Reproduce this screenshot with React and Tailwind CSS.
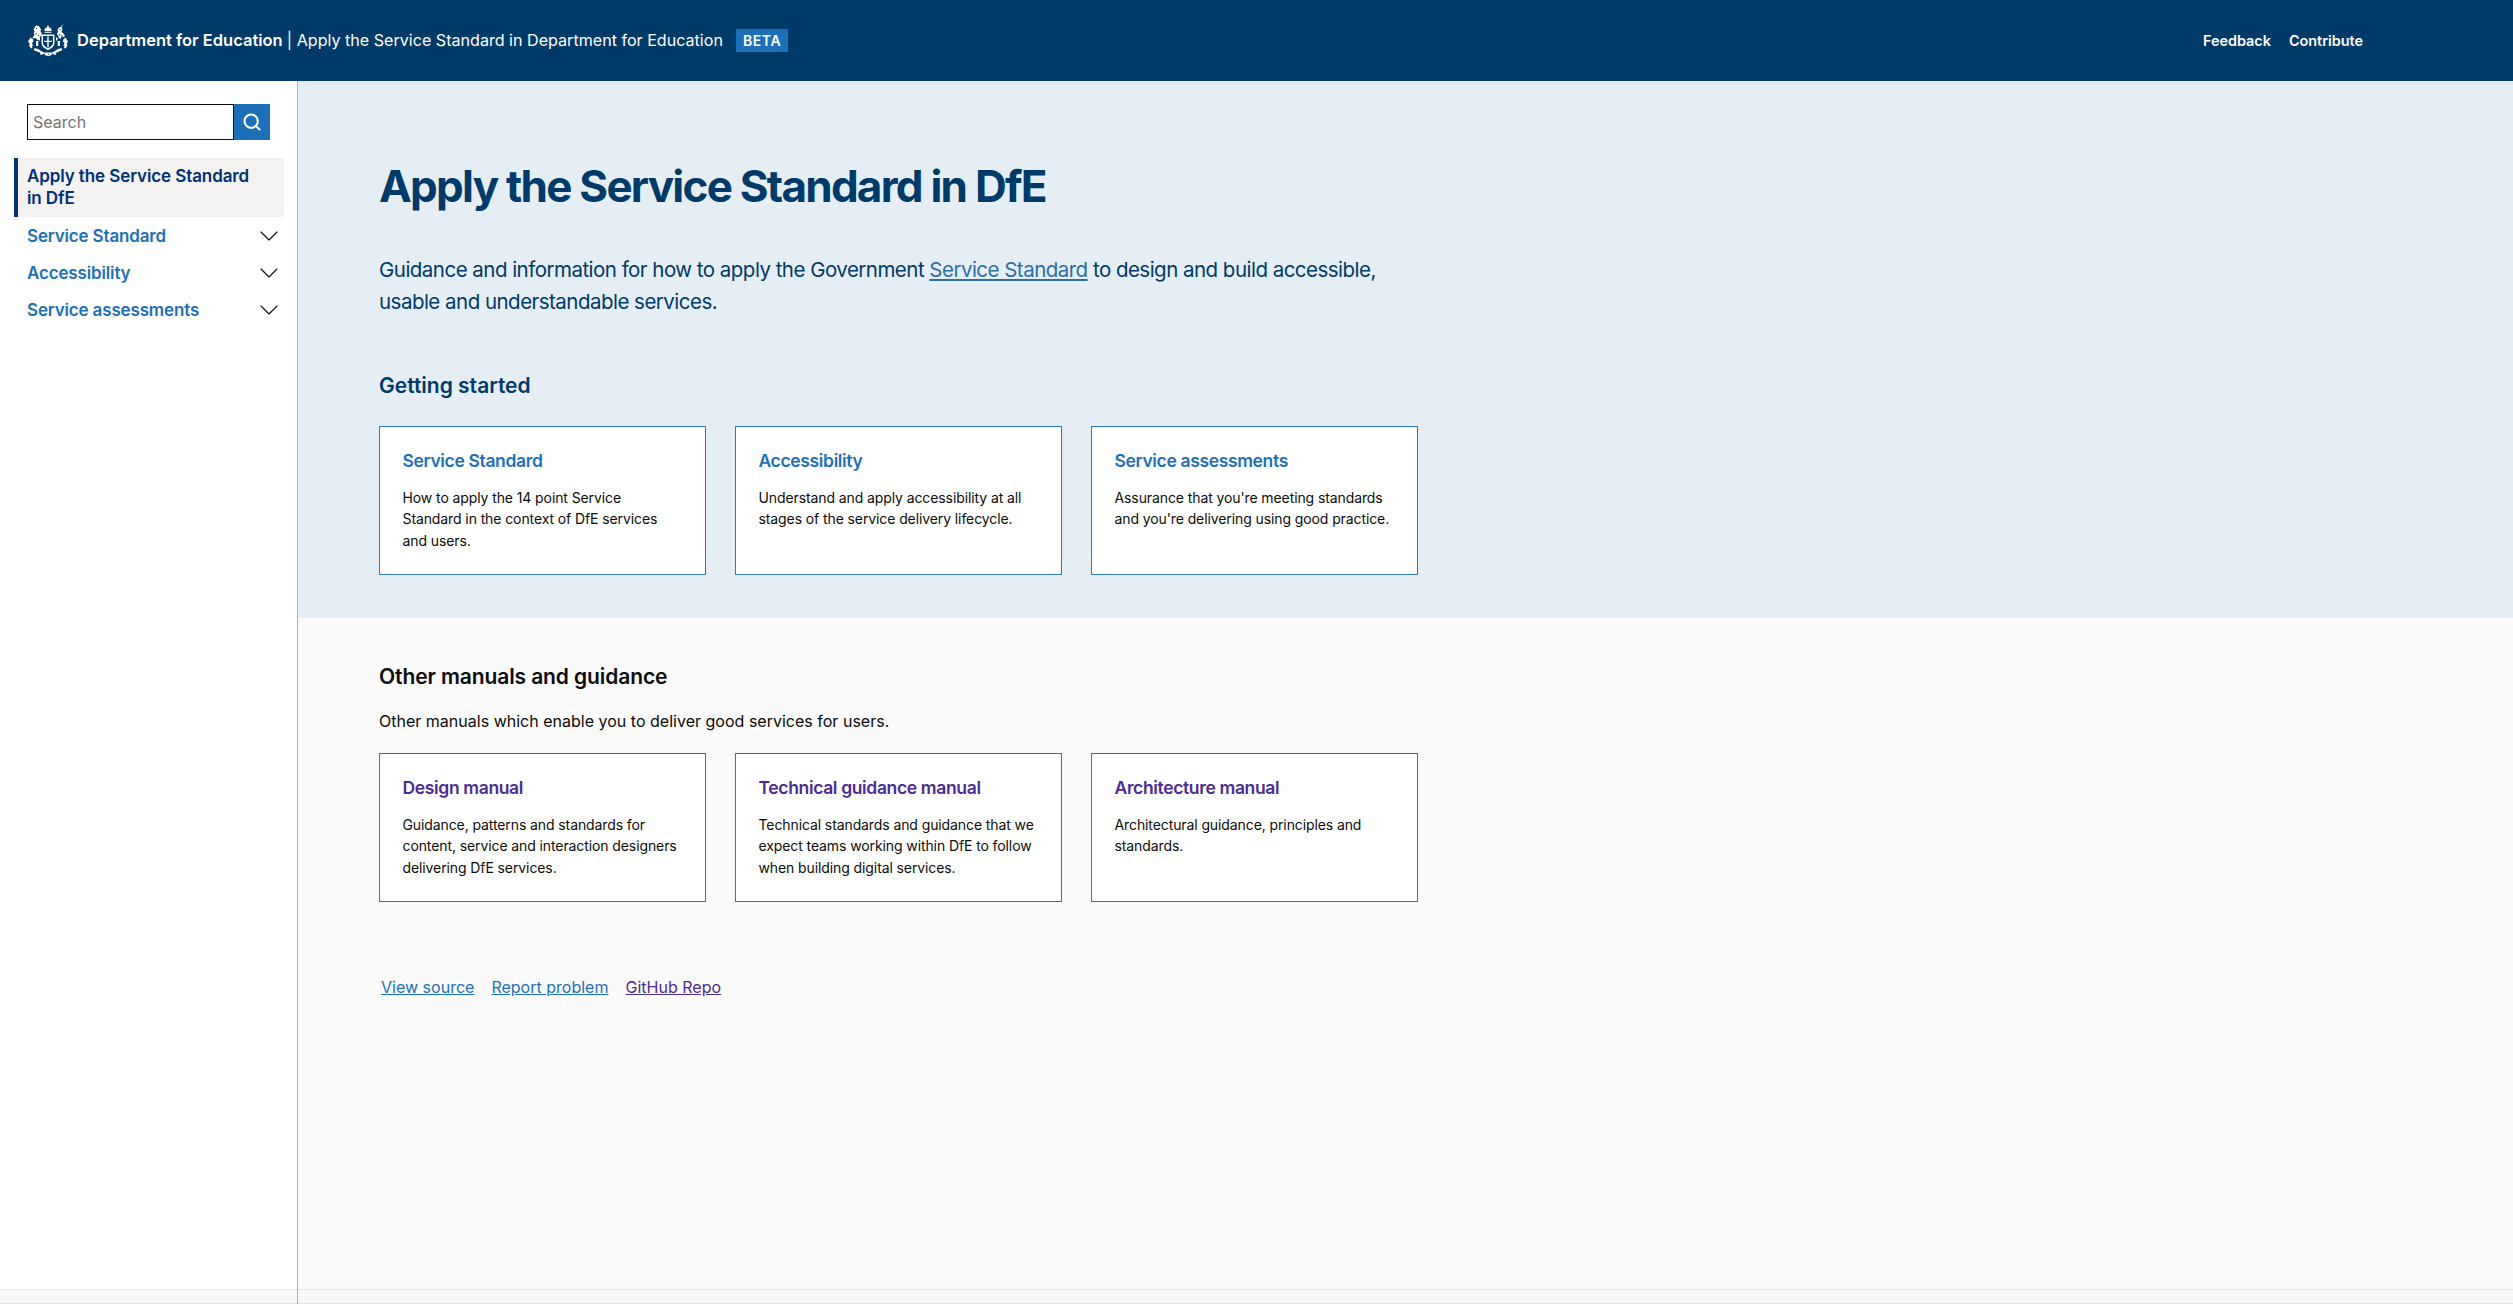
import React from 'react';
import { Search, ChevronDown } from 'lucide-react';

const font = { fontFamily: 'Inter, sans-serif' };

// Royal crest, roughly: crown, lion, unicorn, shield and motto scroll
const Crest = () => (
  <svg viewBox="0 0 40 33" className="w-10 h-[33px] shrink-0" fill="#fff">
    <path d="M17 3.500l1.200 1L20 1l1.800 3.500 1.200-1 .6 3.500h-7.200z" />
    <path d="M16.500 7.800h7v1h-7z" />
    {/* lion */}
    <path d="M8 1.500l2.500.5 1.500 1.500 1 2-.5 2 1.500 2-1 2.500-1.500 1-.5 2.500-1.800.5L8 14l-2.500.5L4.500 13l2-1.500-.8-2.500.8-1.500-1-2z" />
    <path d="M8 4h1v1H8zM7.500 9h1.200v1.200H7.500zM10 11h1v1h-1z" fill="#003a69" />
    {/* unicorn */}
    <path d="M35 0l-1.500 4 1 1.500-1 2.500 2 1.500 1.500 2.500-1.500 1-2-.8-.8 2.500-1.800-.5-.5-2.500-1.500-1.500 1-2.500-.5-2 1.500-2 2-1z" />
    <path d="M31.500 5h1v1h-1zM31 10h1.200v1.200H31zM33.500 11h1v1h-1z" fill="#003a69" />
    {/* side legs and tails */}
    <path d="M2.500 13.500l2.500 1.500.5 2.500-1.500 1.500 1 2.500-1 .5.5 2-1.500.5-2-3 .8-1.500L0 17.500zM37.500 13.500L40 17.500l-1.300 2.500.8 1.500-2 3-1.500-.5.5-2-1-.5 1-2.500-1.500-1.500.5-2.500z" />
    {/* shield */}
    <path fillRule="evenodd" d="M13.500 10.500h13v8.500c0 3.200-3.200 5.500-6.500 7-3.300-1.500-6.500-3.800-6.500-7zM15 12v7c0 2.300 2.600 4 5 5.200 2.400-1.200 5-2.900 5-5.200v-7z" />
    <path d="M19.300 12.500h1.400v4.200h3.300v1.300h-3.300v5.200h-1.400V18H16v-1.300h3.300z" />
    <path d="M8 17h2.300v5H8zM29.700 17H32v5h-2.300z" />
    <path d="M10.500 13.500h1.500v3h-1.500zM28 13.500h1.500v3H28z" />
    {/* motto scroll */}
    <path d="M6.500 24l3.500 1 3 2 3 1.500h8l3-1.500 3-2 3.500-1 .8 2.200-3.800 1.500-2 .8-.8 2.500-3-1-2 1.500-2.500.5-2.500-.5-2-1.500-3 1-.8-2.500-2-.8L5.700 26.200z" />
    <path d="M16 29.500h1v1h-1zM20 29.800h1v1h-1zM23.500 29.500h1v1h-1z" fill="#003a69" />
  </svg>
);

const NavRow = ({ label }) => (
  <div className="flex items-center justify-between h-[37px] pl-[27px] pr-[12px]">
    <a className="mt-[2px] text-[17px] tracking-[-0.15px] font-semibold text-[#1d70b8]">{label}</a>
    <ChevronDown className="w-8 h-8 text-[#0b0c0c]" strokeWidth={0.85} />
  </div>
);

const Card = ({ title, text, visited }) => (
  <div className="w-[327px] h-[149px] shrink-0 bg-white border border-[#2b7ab5] pt-[22px] pl-[22.500px] pr-[23px]">
    <h3 className={`text-[17.500px] tracking-[-0.35px] leading-6 font-semibold ${visited ? 'text-[#4c2c92]' : 'text-[#1d70b8]'}`}>{title}</h3>
    <p className="mt-[14px] text-[14px] tracking-[-0.1px] leading-[21.4px] text-[#0b0c0c]">{text}</p>
  </div>
);

const BottomStrip = () => (
  <div className="h-[15px] shrink-0 bg-[#f8f8f8] border-y border-[#e5e5e5]" />
);

export default function App() {
  return (
    <div className="h-screen w-full flex flex-col overflow-hidden bg-white" style={font}>
      <header className="h-[81px] shrink-0 bg-[#003a69] flex items-center text-white pl-[28px] pb-[1px]">
        <Crest />
        <div className="ml-[9px] flex items-center">
          <span className="text-[16.500px] font-semibold whitespace-pre">Department for Education </span>
          <span className="text-[16.100px] whitespace-pre">| Apply the Service Standard in Department for Education</span>
          <span className="ml-[13px] h-[23px] px-[7px] flex items-center bg-[#1d70b8] text-[14px] font-semibold tracking-[0.6px]">BETA</span>
        </div>
        <nav className="ml-auto mr-[150px] mt-[2px] flex gap-[18px] text-[14.400px] font-semibold">
          <a>Feedback</a>
          <a>Contribute</a>
        </nav>
      </header>

      <div className="flex-1 flex min-h-0">
        <aside className="w-[298px] shrink-0 flex flex-col border-r border-[#b1b4b6]">
          <div className="flex-1">
            <form className="flex mt-[23px] ml-[27px] mr-[27px] h-[36px]">
              <input
                placeholder="Search"
                className="w-[207px] h-full border border-[#0b0c0c] px-[5px] text-[16px] text-[#0b0c0c] placeholder:text-[#757575] bg-white"
              />
              <button type="button" className="w-[36px] h-full bg-[#1d70b8] flex items-center justify-center">
                <Search className="w-5 h-5 text-white" strokeWidth={2.5} />
              </button>
            </form>
            <div className="mt-[18px] ml-[14px] w-[270px] h-[59px] bg-[#f3f2f1] border-l-4 border-[#003078] pl-[9px] pt-[7px] text-[17px] tracking-[-0.1px] leading-[22px] font-semibold text-[#003078]">
              Apply the Service Standard<br />in DfE
            </div>
            <NavRow label="Service Standard" />
            <NavRow label="Accessibility" />
            <NavRow label="Service assessments" />
          </div>
          <BottomStrip />
        </aside>

        <main className="flex-1 flex flex-col min-w-0 bg-[#fafafa]">
          <section className="h-[537px] shrink-0 bg-[#e6eef5] pl-[81px] pt-[78px]">
            <h1 className="text-[44px] tracking-[-1.750px] leading-[54px] font-bold text-[#003a69]">Apply the Service Standard in DfE</h1>
            <p className="mt-[41px] w-[1040px] text-[20.500px] tracking-[-0.52px] leading-[32px] text-[#003a69]">
              Guidance and information for how to apply the Government <a className="underline text-[#2b70a8]">Service Standard</a> to design and build accessible, usable and understandable services.
            </p>
            <h2 className="mt-[52px] text-[21px] leading-[32px] font-semibold text-[#003a69]">Getting started</h2>
            <div className="mt-[24px] flex gap-[29px]">
              <Card title="Service Standard" text="How to apply the 14 point Service Standard in the context of DfE services and users." />
              <Card title="Accessibility" text="Understand and apply accessibility at all stages of the service delivery lifecycle." />
              <Card title="Service assessments" text="Assurance that you're meeting standards and you're delivering using good practice." />
            </div>
          </section>

          <section className="flex-1 pl-[81px] pt-[43px]">
            <h2 className="text-[21px] tracking-[-0.1px] leading-[32px] font-semibold text-[#0b0c0c]">Other manuals and guidance</h2>
            <p className="mt-[16px] text-[16px] tracking-[0.01px] leading-6 text-[#0b0c0c]">Other manuals which enable you to deliver good services for users.</p>
            <div className="mt-[20px] flex gap-[29px]">
              <Card visited title="Design manual" text="Guidance, patterns and standards for content, service and interaction designers delivering DfE services." />
              <Card visited title="Technical guidance manual" text="Technical standards and guidance that we expect teams working within DfE to follow when building digital services." />
              <Card visited title="Architecture manual" text="Architectural guidance, principles and standards." />
            </div>
            <div className="mt-[73px] ml-[2px] flex gap-[17px] text-[16px] tracking-[0.01px] leading-6">
              <a className="underline text-[#1d70b8]">View source</a>
              <a className="underline text-[#1d70b8]">Report problem</a>
              <a className="underline text-[#4c2c92]">GitHub Repo</a>
            </div>
          </section>
          <BottomStrip />
        </main>
      </div>
    </div>
  );
}
